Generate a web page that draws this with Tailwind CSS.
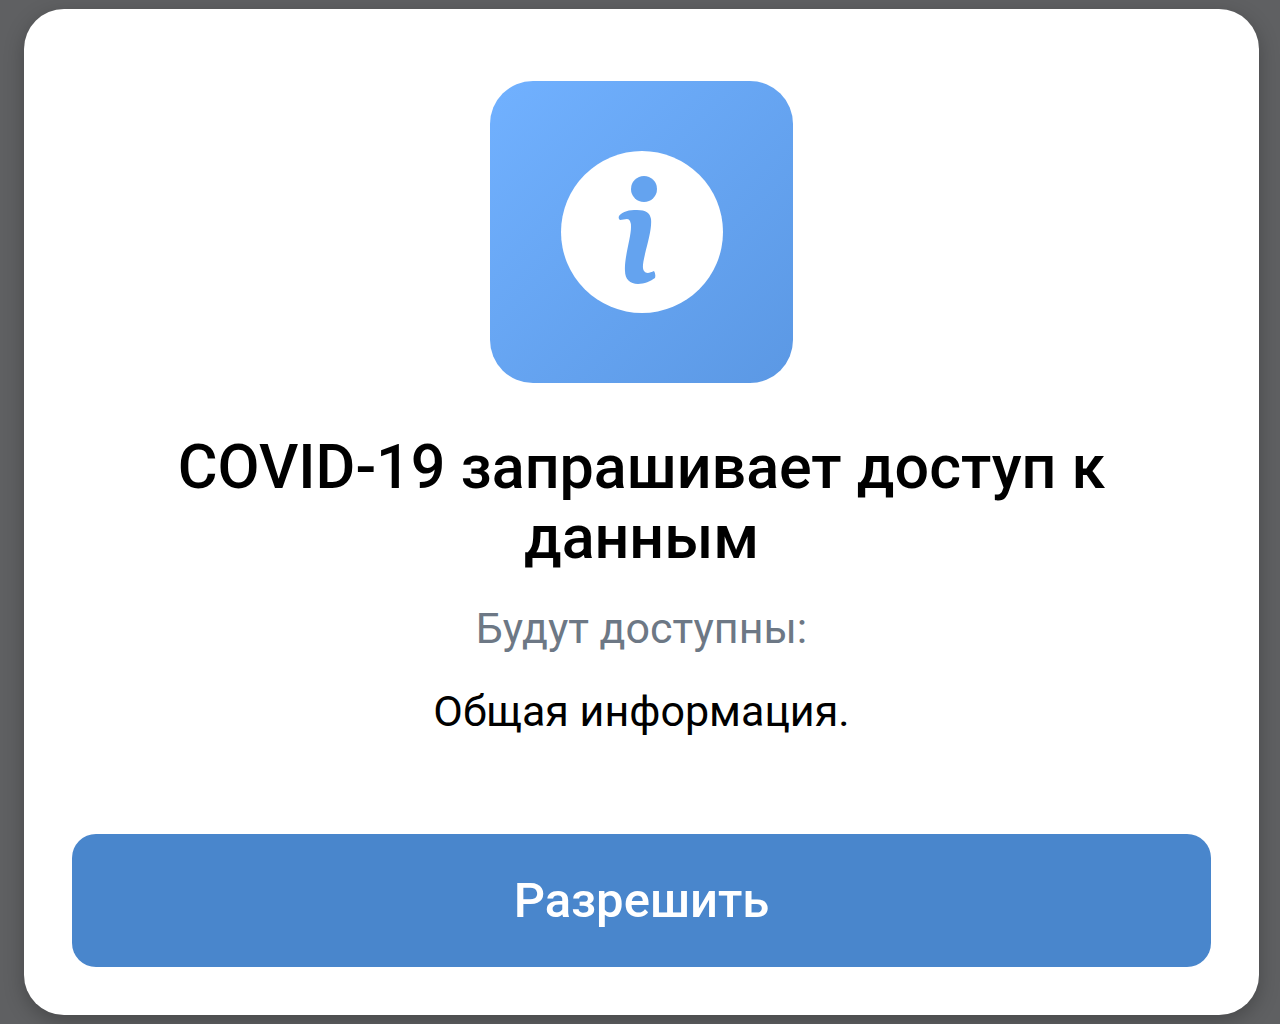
<!DOCTYPE html>
<html lang="ru">

<head>
    <meta charset="UTF-8">
    <meta name="viewport" content="width=device-width, initial-scale=1.0">
    <title>COVID-19</title>
    <script src="https://cdn.jsdelivr.net/npm/@tailwindcss/browser@4"></script>
</head>

<body class="bg-[#5f6062] font-[Roboto,sans-serif] text-black">
    <div class="min-h-screen flex flex-col pt-[9px] pb-[9px] pl-6 pr-[21px]">
        <main class="grow flex flex-col items-center bg-white rounded-[40px] px-12 pt-[72px] pb-12 shadow-[0_6px_20px_rgba(0,0,0,0.25)] text-center">
            <!-- app icon -->
            <svg class="w-[304px] h-[303px]" viewBox="0 0 304 303" aria-hidden="true">
                <defs>
                    <linearGradient id="bg" x1="0" y1="0" x2="1" y2="1">
                        <stop offset="0" stop-color="#71b1ff" />
                        <stop offset="1" stop-color="#5b98e4" />
                    </linearGradient>
                </defs>
                <rect width="303" height="302" rx="43" fill="url(#bg)" />
                <circle cx="152" cy="151" r="81" fill="#fff" />
                <circle cx="154" cy="108" r="13" fill="#64a3ef" />
                <path d="M129 135C133 130 139 129 147 129C156 129 160 132 161 138C162 147 158 161 155 173C153 182 152 187 154 190C156 193 160 192 164 190Q166 193 165 197C161 200 154 203 148 203C140 203 135 198 135 190C134 177 141 157 141 146Q141 138 137 138L130 139Q128 138 129 135Z" fill="#64a3ef" />
            </svg>

            <h1 class="mt-12 text-[61px] leading-[70px] font-medium">COVID-19 запрашивает доступ к данным</h1>
            <p class="mt-8 text-[43px] leading-[48px] text-[#6d7885]">Будут доступны:</p>
            <p class="mt-[35px] text-[43px] leading-[48px]">Общая информация.</p>

            <button type="button" class="mt-auto w-full h-[133px] rounded-3xl bg-[#4986cc] text-white text-[49px] font-medium">Разрешить</button>
        </main>
    </div>
</body>

</html>
